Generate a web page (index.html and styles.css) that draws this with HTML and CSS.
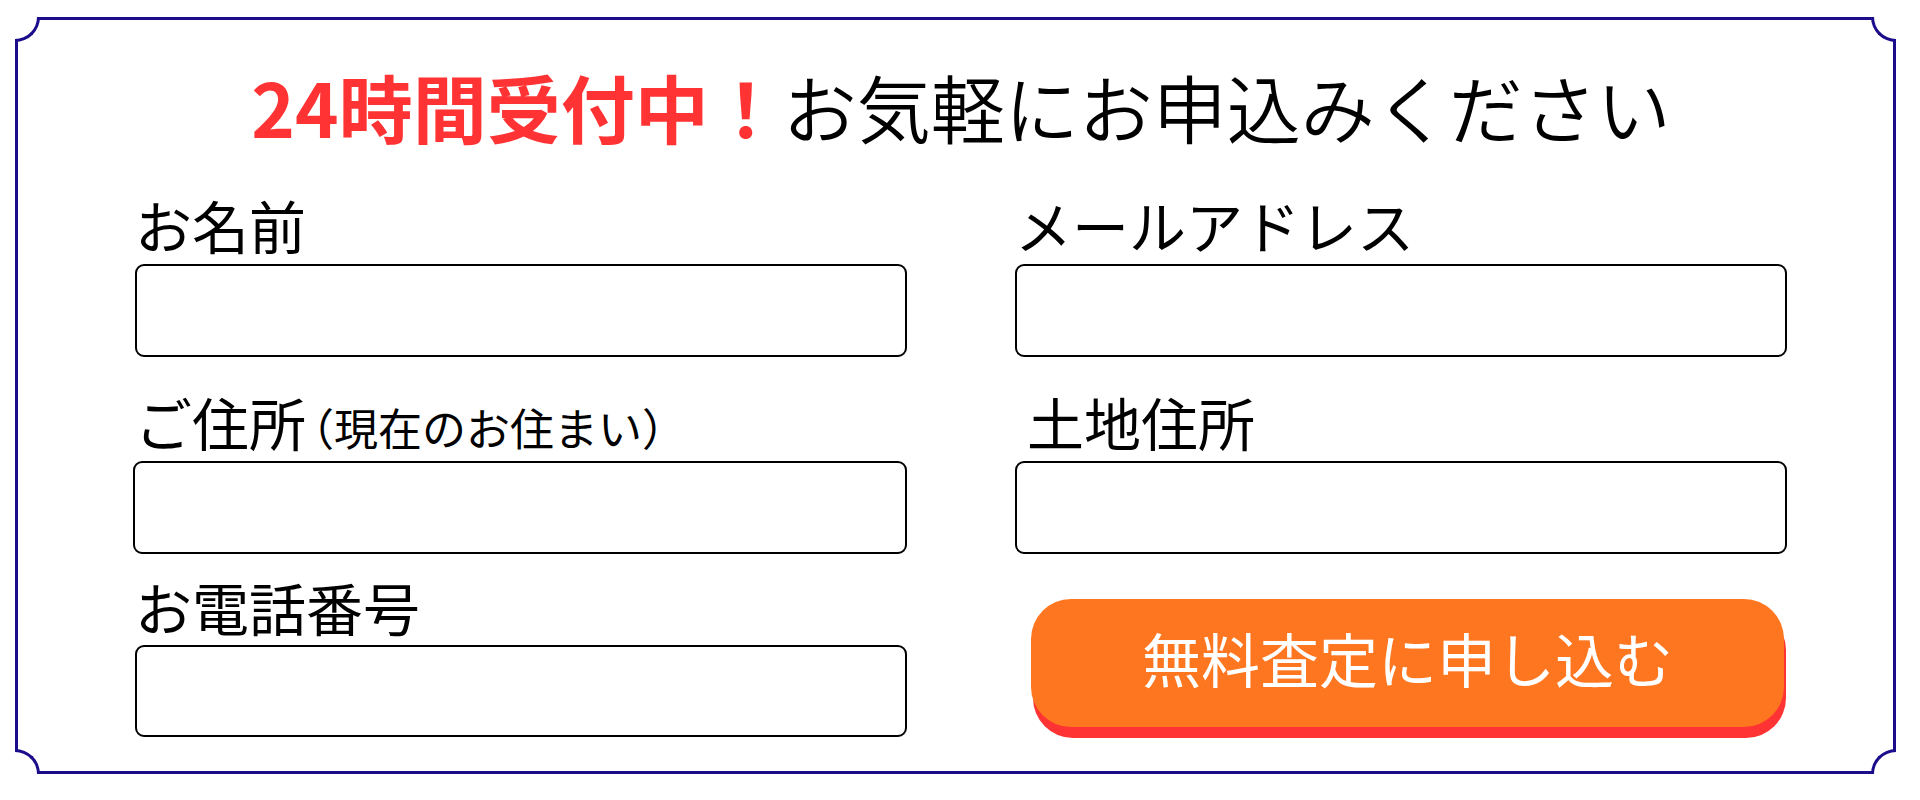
FILE: index.html
```html
<!DOCTYPE html>
<html lang="ja">
<head>
<meta charset="utf-8">
<title>無料査定フォーム</title>
<link rel="stylesheet" href="styles.css">
</head>
<body>
<div class="frame">
  <span class="corner corner-tl"></span>
  <span class="corner corner-tr"></span>
  <span class="corner corner-bl"></span>
  <span class="corner corner-br"></span>
  <h1 class="title"><span class="title-accent">24時間受付中！</span>お気軽にお申込みください</h1>
  <form class="form">
    <div class="field">
      <label class="label">お名前</label>
      <div class="box"></div>
    </div>
    <div class="field">
      <label class="label">メールアドレス</label>
      <div class="box"></div>
    </div>
    <div class="field field-row2">
      <label class="label">ご住所<span class="label-sub">（現在のお住まい）</span></label>
      <div class="box box-shift"></div>
    </div>
    <div class="field field-row2">
      <label class="label label-indent">土地住所</label>
      <div class="box"></div>
    </div>
    <div class="field field-row3">
      <label class="label label-tight">お電話番号</label>
      <div class="box box-short"></div>
    </div>
    <div class="field field-row3">
      <button type="button" class="submit">無料査定に申し込む</button>
    </div>
  </form>
</div>
</body>
</html>
```
FILE: styles.css
```css
html, body {
  margin: 0;
  padding: 0;
  background: #ffffff;
}

body {
  font-family: "Noto Sans CJK JP", "Noto Sans", sans-serif;
  color: #000;
}

.frame {
  position: relative;
  box-sizing: border-box;
  width: 1881px;
  height: 757px;
  margin: 17px 0 0 15px;
  border: 3px solid #1b0c8c;
  padding: 49px 106px 0 117px;
}

.corner {
  position: absolute;
  width: 22px;
  height: 22px;
  background: #fff;
  border: 0 solid #1b0c8c;
}

.corner-tl {
  top: -3px;
  left: -3px;
  border-right-width: 3px;
  border-bottom-width: 3px;
  border-bottom-right-radius: 25px;
}

.corner-tr {
  top: -3px;
  right: -3px;
  border-left-width: 3px;
  border-bottom-width: 3px;
  border-bottom-left-radius: 25px;
}

.corner-bl {
  bottom: -3px;
  left: -3px;
  border-right-width: 3px;
  border-top-width: 3px;
  border-top-right-radius: 25px;
}

.corner-br {
  bottom: -3px;
  right: -3px;
  border-left-width: 3px;
  border-top-width: 3px;
  border-top-left-radius: 25px;
}

.title {
  margin: 0 -106px 53px -106px;
  font-size: 74px;
  line-height: 74px;
  height: 74px;
  font-weight: 350;
  text-align: center;
  white-space: nowrap;
}

.title-accent {
  color: #ff3333;
  font-weight: 700;
}

.form {
  display: grid;
  grid-template-columns: 772px 772px;
  column-gap: 108px;
}

.field {
  display: flex;
  flex-direction: column;
}

.field-row2 {
  margin-top: 36px;
}

.field-row3 {
  margin-top: 24px;
}

.label {
  display: block;
  height: 57px;
  font-size: 57px;
  line-height: 57px;
  margin-bottom: 11px;
  white-space: nowrap;
}

.label-tight {
  margin-bottom: 10px;
}

.label-sub {
  font-size: 44px;
  line-height: 44px;
  margin-left: -16px;
}

.label-indent {
  padding-left: 12px;
}

.box {
  box-sizing: border-box;
  height: 93px;
  border: 2px solid #000;
  border-radius: 9px;
  background: #fff;
}

.box-shift {
  margin-left: -2px;
}

.box-short {
  height: 92px;
}

.submit {
  box-sizing: border-box;
  height: 128px;
  margin: 21px 3px 0 16px;
  padding: 0 0 12px;
  border: none;
  border-radius: 40px;
  background: #ff7620;
  box-shadow: 2px 11px 0 #ff3333;
  color: #fff;
  font-family: "Noto Sans CJK JP", "Noto Sans", sans-serif;
  font-size: 59px;
  line-height: 59px;
  font-weight: 400;
  text-align: center;
}
```
